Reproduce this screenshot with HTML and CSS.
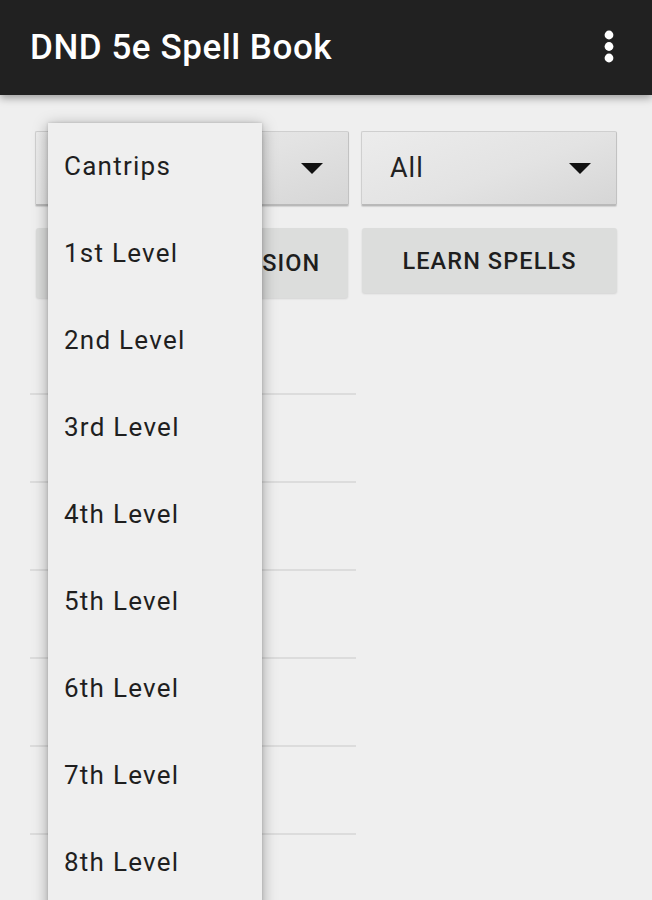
FILE: index.html
```html
<!DOCTYPE html>
<html lang="en">
<head>
<meta charset="utf-8">
<title>DND 5e Spell Book</title>
<link rel="stylesheet" href="styles.css">
</head>
<body>
<header class="appbar">
  <h1 class="title">DND 5e Spell Book</h1>
  <svg class="kebab" width="10" height="34" viewBox="0 0 10 34" aria-hidden="true">
    <circle cx="5" cy="5" r="4.4" fill="#fff"/>
    <circle cx="5" cy="16.5" r="4.4" fill="#fff"/>
    <circle cx="5" cy="28" r="4.4" fill="#fff"/>
  </svg>
</header>
<main class="content">
  <div class="row spinners">
    <div class="spinner"><span class="spin-label">Cantrips</span><span class="caret"></span></div>
    <div class="spinner"><span class="spin-label">All</span><span class="caret"></span></div>
  </div>
  <div class="row buttons">
    <div class="btn btn-left">CHOOSE PROFESSION</div>
    <div class="btn btn-right">LEARN SPELLS</div>
  </div>
  <ul class="spell-list">
    <li></li><li></li><li></li><li></li><li></li><li></li><li></li>
  </ul>
</main>
<ul class="menu">
  <li>Cantrips</li>
  <li>1st Level</li>
  <li>2nd Level</li>
  <li>3rd Level</li>
  <li>4th Level</li>
  <li>5th Level</li>
  <li>6th Level</li>
  <li>7th Level</li>
  <li>8th Level</li>
</ul>
</body>
</html>
```
FILE: styles.css
```css
html, body {
  margin: 0;
  padding: 0;
}
body {
  width: 652px;
  height: 900px;
  overflow: hidden;
  background: #efefef;
  font-family: Roboto, "Liberation Sans", sans-serif;
  position: relative;
}
.appbar {
  height: 95px;
  background: #212121;
  display: flex;
  align-items: center;
  padding: 0 38px 0 30px;
  box-shadow: 0 3px 8px rgba(0, 0, 0, 0.35);
  position: relative;
  z-index: 1;
}
.title {
  margin: 0;
  color: #fff;
  font-size: 35px;
  font-weight: 500;
  letter-spacing: 0.55px;
}
.kebab {
  margin-left: auto;
  margin-top: -1px;
}
.content {
  padding: 36px 0 0 30px;
}
.row {
  display: grid;
  grid-template-columns: 314px 256px;
  column-gap: 12px;
  margin-left: 5px;
}
.spinner {
  height: 75px;
  box-sizing: border-box;
  border: 1px solid #cfcfcf;
  border-bottom: 2px solid #b9b9b9;
  border-right-color: #c2c2c2;
  border-radius: 2px;
  background: linear-gradient(160deg, #ececec 0%, #e3e3e3 55%, #d6d6d6 100%);
  display: flex;
  align-items: center;
  padding: 0 25px 0 28px;
  box-shadow: 0 1px 1px rgba(0, 0, 0, 0.12);
}
.spin-label {
  font-size: 27px;
  color: #222;
  letter-spacing: 1px;
}
.caret {
  margin-left: auto;
  width: 0;
  height: 0;
  border-left: 11px solid transparent;
  border-right: 11px solid transparent;
  border-top: 11px solid #111;
}
.buttons {
  margin-top: 22px;
  align-items: start;
}
.btn {
  background: #dcdddc;
  border-radius: 3px;
  display: flex;
  align-items: center;
  justify-content: center;
  font-size: 23.5px;
  font-weight: 500;
  color: #1e1e1e;
  letter-spacing: 1.1px;
  box-shadow: 0 1px 2px rgba(0, 0, 0, 0.12);
}
.btn-left {
  height: 70px;
  margin-left: 1px;
  width: 312px;
}
.btn-right {
  height: 65px;
  margin-left: 1px;
  width: 255px;
}
.spell-list {
  list-style: none;
  margin: 9px 0 0 0;
  padding: 0;
  width: 326px;
}
.spell-list li {
  height: 86px;
  border-bottom: 2px solid #dcdcdc;
}
.menu {
  position: absolute;
  left: 48px;
  top: 123px;
  bottom: -40px;
  width: 214px;
  margin: 0;
  padding: 0;
  list-style: none;
  background: #efefef;
  box-shadow: 0 3px 14px rgba(0, 0, 0, 0.35), 0 0 3px rgba(0, 0, 0, 0.15);
  z-index: 2;
}
.menu li {
  height: 87px;
  line-height: 87px;
  padding-left: 16px;
  font-size: 26px;
  color: #1f1f1f;
  letter-spacing: 1.25px;
}
```
